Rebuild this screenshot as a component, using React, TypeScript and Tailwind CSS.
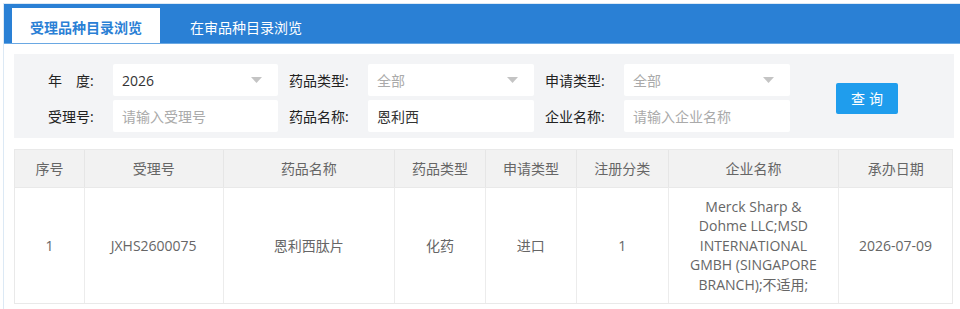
import React from 'react';

const font = { fontFamily: '"Open Sans", "Noto Sans CJK SC", sans-serif' };

const Caret: React.FC = () => (
  <svg width="11" height="6" viewBox="0 0 11 6" className="shrink-0">
    <path d="M0 0 L11 0 L5.5 6 Z" fill="#c4c4c4" />
  </svg>
);

interface FieldProps {
  value?: string;
  placeholder?: string;
  select?: boolean;
  width: string;
}

const Field: React.FC<FieldProps> = ({ value, placeholder, select, width }) => (
  <div className={`${width} h-[32px] bg-white rounded-[2px] flex items-center justify-between pl-[9px] pr-[16px] text-[14px]`}>
    {value ? <span className="text-[#333]">{value}</span> : <span className="text-[#aaa]">{placeholder}</span>}
    {select && <Caret />}
  </div>
);

const Label: React.FC<{ text: string; width: string }> = ({ text, width }) => (
  <div className={`${width} shrink-0 text-[14px] text-[#222] whitespace-pre`}>{text}</div>
);

const cols = ['w-[69px]', 'w-[139px]', 'w-[172px]', 'w-[91px]', 'w-[91px]', 'w-[92px]', 'w-[171px]', 'w-[114px]'];
const heads = ['序号', '受理号', '药品名称', '药品类型', '申请类型', '注册分类', '企业名称', '承办日期'];

export default function App() {
  return (
    <div className="w-[960px] h-[309px] bg-white pt-[3px] pl-[3px] overflow-hidden" style={font}>
      <div className="h-full border-l border-t border-[#dce9f5]">
        <div className="h-[40px] bg-[#2a80d5] border-b border-[#6aa8e3] flex items-end pl-[8px]">
          <div className="w-[148px] h-[35px] bg-white flex items-center justify-center pt-[3px] text-[14px] font-bold text-[#2a80d5]">
            受理品种目录浏览
          </div>
          <div className="h-[35px] px-[30px] pt-[3px] flex items-center text-[14px] text-white">在审品种目录浏览</div>
        </div>

        <div className="pl-[10px] pr-[6px] pt-[10px]">
          <div className="h-[84px] bg-[#f3f4f6] flex items-start pt-[10px]">
            <div className="flex flex-col gap-[4px] pl-[34px]">
              <div className="flex items-center">
                <Label text={'年\u3000度:'} width="w-[65px]" />
                <Field value="2026" select width="w-[165px]" />
                <div className="w-[11px]" />
                <Label text="药品类型:" width="w-[79px]" />
                <Field placeholder="全部" select width="w-[166px]" />
                <div className="w-[11px]" />
                <Label text="申请类型:" width="w-[79px]" />
                <Field placeholder="全部" select width="w-[166px]" />
              </div>
              <div className="flex items-center">
                <Label text="受理号:" width="w-[65px]" />
                <Field placeholder="请输入受理号" width="w-[165px]" />
                <div className="w-[11px]" />
                <Label text="药品名称:" width="w-[79px]" />
                <Field value="恩利西" width="w-[166px]" />
                <div className="w-[11px]" />
                <Label text="企业名称:" width="w-[79px]" />
                <Field placeholder="请输入企业名称" width="w-[166px]" />
              </div>
            </div>
            <button className="ml-[46px] mt-[19px] w-[62px] h-[31px] bg-[#1f9ded] text-white text-[14px] rounded-[2px] tracking-[4px] pl-[4px]">
              查询
            </button>
          </div>

          <div className="mt-[11px] w-[939px] border border-[#e9e9e9] text-[14px]">
            <div className="flex h-[37px] bg-[#f2f2f2] text-[#666]">
              {heads.map((h, i) => (
                <div key={h} className={`${cols[i]} flex items-center justify-center ${i > 0 ? 'border-l border-[#e6e6e6]' : ''}`}>
                  {h}
                </div>
              ))}
            </div>
            <div className="flex h-[116px] text-[#666] border-t border-[#e9e9e9]">
              {['1', 'JXHS2600075', '恩利西肽片', '化药', '进口', '1'].map((v, i) => (
                <div key={i} className={`${cols[i]} flex items-center justify-center ${i > 0 ? 'border-l border-[#ececec]' : ''}`}>
                  {v}
                </div>
              ))}
              <div className={`${cols[6]} flex items-center justify-center text-center border-l border-[#ececec] px-[14px] leading-[19.5px]`}>
                Merck Sharp &amp; Dohme LLC;MSD INTERNATIONAL GMBH (SINGAPORE BRANCH);不适用;
              </div>
              <div className={`${cols[7]} flex items-center justify-center border-l border-[#ececec]`}>2026-07-09</div>
            </div>
          </div>
        </div>
      </div>
    </div>
  );
}
